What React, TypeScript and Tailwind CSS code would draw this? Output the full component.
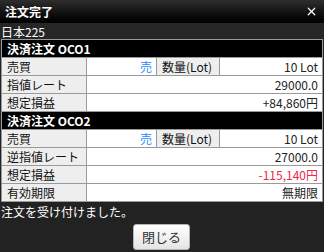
import { X } from "lucide-react";

const font = { fontFamily: '"Noto Sans CJK JP", "Noto Sans", sans-serif' };

const Label = ({ children }: { children: React.ReactNode }) => (
  <td className="h-[18px] border border-[#9a9a9a] bg-[#eeeeee] pl-[5px] text-[12px] leading-none text-[#111]">
    {children}
  </td>
);

const Value = ({ children, span = 1, cls = "text-[#222]" }: { children: React.ReactNode; span?: number; cls?: string }) => (
  <td colSpan={span} className={`h-[18px] border border-[#9a9a9a] bg-white pr-[4px] text-right text-[12px] leading-none ${cls}`}>
    {children}
  </td>
);

const Header = ({ title }: { title: string }) => (
  <tr>
    <td colSpan={4} className="h-[18px] border border-[#9a9a9a] bg-black pl-[5px] text-[12px] font-bold leading-none text-white">
      {title}
    </td>
  </tr>
);

export default function App() {
  return (
    <div className="flex h-[252px] w-[324px] flex-col bg-[#222222]" style={font}>
      <div className="flex h-[23px] items-center justify-between bg-gradient-to-b from-[#2e2e2e] to-[#020202] pl-[5px] pr-[6px]">
        <span className="text-[12px] font-bold text-white">注文完了</span>
        <X className="h-[13px] w-[13px] text-white" strokeWidth={2.2} />
      </div>
      <div className="h-[16px] bg-[#262626] pl-[1px] pt-[3px] text-[12px] leading-none text-white">日本225</div>
      <table className="ml-[1px] w-[322px] table-fixed border-collapse">
        <colgroup>
          <col className="w-[85px]" />
          <col className="w-[70px]" />
          <col className="w-[63px]" />
          <col />
        </colgroup>
        <tbody>
          <Header title="決済注文 OCO1" />
          <tr>
            <Label>売買</Label>
            <Value cls="text-[#1e8cff]">売</Value>
            <Label>数量(Lot)</Label>
            <Value>10 Lot</Value>
          </tr>
          <tr>
            <Label>指値レート</Label>
            <Value span={3}>29000.0</Value>
          </tr>
          <tr>
            <Label>想定損益</Label>
            <Value span={3}>+84,860円</Value>
          </tr>
          <Header title="決済注文 OCO2" />
          <tr>
            <Label>売買</Label>
            <Value cls="text-[#1e8cff]">売</Value>
            <Label>数量(Lot)</Label>
            <Value>10 Lot</Value>
          </tr>
          <tr>
            <Label>逆指値レート</Label>
            <Value span={3}>27000.0</Value>
          </tr>
          <tr>
            <Label>想定損益</Label>
            <Value span={3} cls="text-[#f0264a]">-115,140円</Value>
          </tr>
          <tr>
            <Label>有効期限</Label>
            <Value span={3}>無期限</Value>
          </tr>
        </tbody>
      </table>
      <div className="mt-[4px] pl-[1px] text-[12px] leading-none text-white">注文を受け付けました。</div>
      <div className="flex flex-1 items-start justify-center pt-[6px]">
        <button className="ml-[-1px] h-[26px] w-[57px] rounded-[3px] border border-[#b5b5b5] bg-gradient-to-b from-white to-[#e4e4e4] text-[13px] text-[#333]">
          閉じる
        </button>
      </div>
    </div>
  );
}
